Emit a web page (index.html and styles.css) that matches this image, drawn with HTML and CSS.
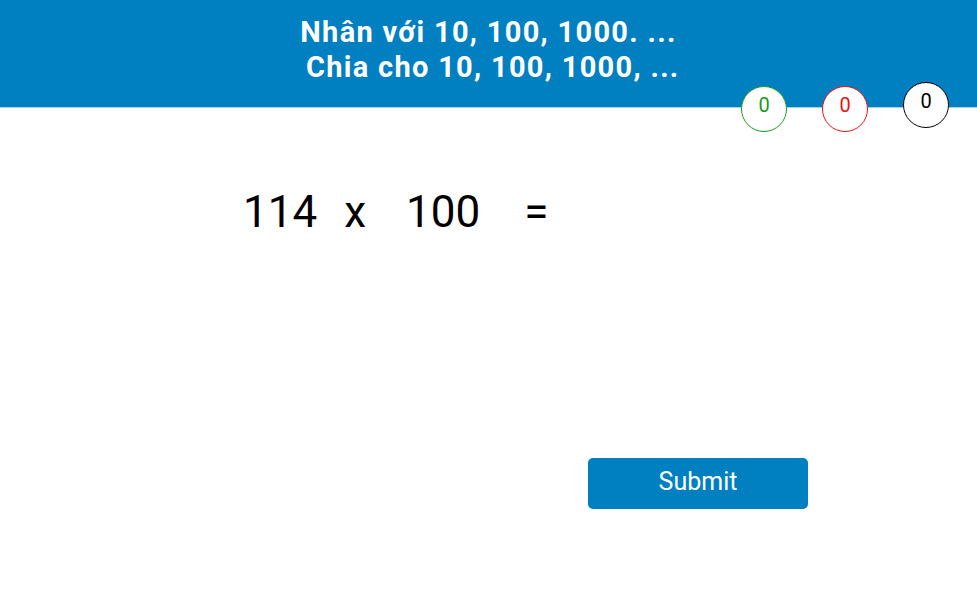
FILE: index.html
```html
<!DOCTYPE html>
<html lang="vi">
<head>
<meta charset="utf-8">
<title>Nhân với 10, 100, 1000</title>
<link rel="stylesheet" href="styles.css">
</head>
<body>
<div class="app">
  <header class="top">
    <h1 class="title">Nhân với 10, 100, 1000. ...<br>&nbsp;Chia cho 10, 100, 1000, ...</h1>
  </header>
  <div class="score score-right">0</div>
  <div class="score score-wrong">0</div>
  <div class="score score-total">0</div>
  <main class="body">
    <div class="equation">
      <span class="num a">114</span>
      <span class="op x">x</span>
      <span class="num b">100</span>
      <span class="op eq">=</span>
    </div>
    <div class="actions">
      <button class="submit" type="button">Submit</button>
    </div>
  </main>
</div>
</body>
</html>
```
FILE: styles.css
```css
* { box-sizing: border-box; }
html, body { margin: 0; padding: 0; background: #fff; }
body { font-family: Roboto, "Noto Sans", Arial, sans-serif; color: #000; }
.app { position: relative; width: 977px; height: 601px; overflow: hidden; }
.top {
  height: 108px;
  background: #0080c1;
  border-bottom: 1px solid #9fd0ea;
  padding-top: 15px;
}
.title {
  margin: 0;
  color: #fff;
  font-size: 29px;
  font-weight: 700;
  letter-spacing: 1.3px;
  line-height: 35px;
  text-align: center;
}
.score {
  position: absolute;
  width: 46px;
  height: 46px;
  border-radius: 50%;
  background: #fff;
  border: 1.5px solid #000;
  font-size: 20px;
  line-height: 36px;
  text-align: center;
}
.score-right { left: 741px; top: 86px; border-color: #1a9a1a; color: #1a9a1a; }
.score-wrong { left: 822px; top: 86px; border-color: #f01010; color: #f01010; }
.score-total { left: 903px; top: 82px; border-color: #000; color: #000; }
.body { padding-top: 78px; }
.equation {
  display: flex;
  align-items: baseline;
  padding-left: 243px;
  font-size: 44px;
  line-height: 52px;
}
.x { margin-left: 27px; }
.b { margin-left: 40px; }
.eq { margin-left: 44px; }
.actions { padding-left: 588px; padding-top: 220px; }
.submit {
  width: 220px;
  height: 51px;
  border: none;
  border-radius: 5px;
  background: #0080c1;
  color: #fff;
  font-family: Roboto, "Noto Sans", Arial, sans-serif;
  font-size: 25px;
  padding: 0 0 4px;
}
```
